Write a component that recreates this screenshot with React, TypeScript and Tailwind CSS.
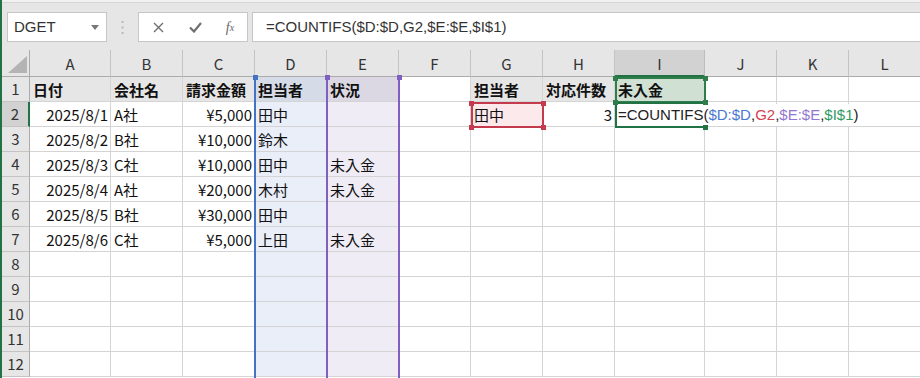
import React from "react";

const COLS = ["A", "B", "C", "D", "E", "F", "G", "H", "I", "J", "K", "L"];

type Cell = { t: string; r?: boolean; b?: boolean };
const DATA: Record<string, Cell> = {
  A1: { t: "日付", b: true },
  B1: { t: "会社名", b: true },
  C1: { t: "請求金額", b: true },
  D1: { t: "担当者", b: true },
  E1: { t: "状況", b: true },
  G1: { t: "担当者", b: true },
  H1: { t: "対応件数", b: true },
  I1: { t: "未入金", b: true },
  A2: { t: "2025/8/1", r: true },
  B2: { t: "A社" },
  C2: { t: "¥5,000", r: true },
  D2: { t: "田中" },
  G2: { t: "田中" },
  H2: { t: "3", r: true },
  A3: { t: "2025/8/2", r: true },
  B3: { t: "B社" },
  C3: { t: "¥10,000", r: true },
  D3: { t: "鈴木" },
  A4: { t: "2025/8/3", r: true },
  B4: { t: "C社" },
  C4: { t: "¥10,000", r: true },
  D4: { t: "田中" },
  E4: { t: "未入金" },
  A5: { t: "2025/8/4", r: true },
  B5: { t: "A社" },
  C5: { t: "¥20,000", r: true },
  D5: { t: "木村" },
  E5: { t: "未入金" },
  A6: { t: "2025/8/5", r: true },
  B6: { t: "B社" },
  C6: { t: "¥30,000", r: true },
  D6: { t: "田中" },
  A7: { t: "2025/8/6", r: true },
  B7: { t: "C社" },
  C7: { t: "¥5,000", r: true },
  D7: { t: "上田" },
  E7: { t: "未入金" },
};

function cellBg(col: string, row: number): string {
  if (row === 1) {
    if (col === "A" || col === "B" || col === "C" || col === "G" || col === "H") return "bg-[#e7e6e6]";
    if (col === "D") return "bg-[#d6dce7]";
    if (col === "E") return "bg-[#dcd8e3]";
    if (col === "I") return "bg-[#d0e0d3]";
    return "bg-white";
  }
  if (col === "D") return "bg-[#e9eef8]";
  if (col === "E") return "bg-[#efecf6]";
  if (col === "G" && row === 2) return "bg-[#fbe9ec]";
  return "bg-white";
}

const CJK = { fontFamily: '"Noto Sans CJK JP", "Noto Sans", sans-serif' };

function Handle({ x, y, color }: { x: number; y: number; color: string }) {
  return (
    <div
      className="absolute w-[5px] h-[5px] z-30"
      style={{ left: x - 2 - 2, top: y - 2, backgroundColor: color }}
    />
  );
}

export default function App() {
  const rows = Array.from({ length: 12 }, (_, i) => i + 1);
  return (
    <div
      className="relative w-[920px] h-[378px] overflow-hidden border-l-2 border-[#217346] bg-white"
      style={CJK}
    >
      {/* Toolbar */}
      <div className="h-[50px] bg-[#e6e6e6] flex flex-col">
        <div className="h-[3px] bg-[#f1f1f1] border-b border-[#d6d6d6]" />
        <div className="flex items-start pt-[9px]">
          <div className="ml-[5px] w-[100px] h-[30px] bg-white border border-[#c6c6c6] flex items-center justify-between pl-[6px] pr-[7px]">
            <span
              className="text-[15px] text-[#333]"
              style={{ fontFamily: '"Liberation Sans", Arial, sans-serif' }}
            >
              DGET
            </span>
            <svg width="8" height="5" viewBox="0 0 8 5">
              <path d="M0 0 L8 0 L4 5 Z" fill="#777" />
            </svg>
          </div>
          <div className="w-[31px] h-[30px] flex items-center justify-center">
            <svg width="3" height="13" viewBox="0 0 3 13">
              <rect x="0.5" y="0" width="2" height="2" fill="#b9b9b9" />
              <rect x="0.5" y="5.5" width="2" height="2" fill="#b9b9b9" />
              <rect x="0.5" y="11" width="2" height="2" fill="#b9b9b9" />
            </svg>
          </div>
          <div className="w-[110px] h-[30px] bg-white border border-[#c6c6c6] flex items-center">
            <div className="w-[38px] flex justify-center pl-[1px]">
              <svg width="11" height="11" viewBox="0 0 11 11">
                <path d="M1 1 L10 10 M10 1 L1 10" stroke="#6f6f6f" strokeWidth="1.4" />
              </svg>
            </div>
            <div className="w-[36px] flex justify-center">
              <svg width="13" height="11" viewBox="0 0 13 11">
                <path d="M1 5.5 L5 9.5 L12 1" stroke="#6f6f6f" strokeWidth="2.2" fill="none" />
              </svg>
            </div>
            <div
              className="w-[34px] flex justify-center text-[#666] italic text-[14px]"
              style={{ fontFamily: '"Liberation Serif", "Times New Roman", serif' }}
            >
              f<span className="text-[10px] mt-[3px]">x</span>
            </div>
          </div>
          <div className="ml-[4px] flex-1 h-[30px] bg-white border border-[#c6c6c6] border-r-0 flex items-center pl-[13px]">
            <span
              className="text-[15px] text-[#333]"
              style={{ fontFamily: '"Liberation Sans", Arial, sans-serif' }}
            >
              =COUNTIFS($D:$D,G2,$E:$E,$I$1)
            </span>
          </div>
        </div>
      </div>

      {/* Grid */}
      <div className="grid grid-cols-[28px_81px_72px_72px_72px_72px_72px_72px_72px_90px_72px_72px_72px] grid-rows-[27px_repeat(12,25px)]">
        {/* corner */}
        <div className="relative bg-[#e6e6e6] border-r border-b border-[#ababab]">
          <svg className="absolute left-[6px] top-[6px]" width="19" height="17" viewBox="0 0 19 17">
            <path d="M0 17 L19 17 L19 0 Z" fill="#b4b4b4" />
          </svg>
        </div>
        {COLS.map((c) =>
          c === "I" ? (
            <div
              key={c}
              className="bg-[#d2d2d2] border-r border-[#bdbdbd] border-b-2 border-b-[#217346] flex items-center justify-center text-[15px] text-[#333] pt-[3px]"
            >
              {c}
            </div>
          ) : (
            <div
              key={c}
              className="bg-[#e6e6e6] border-r border-[#c4c4c4] border-b border-b-[#ababab] flex items-center justify-center text-[15px] text-[#333] pt-[2px]"
            >
              {c}
            </div>
          )
        )}
        {rows.map((r) => (
          <React.Fragment key={r}>
            {r === 2 ? (
              <div className="bg-[#d2d2d2] border-r-2 border-r-[#217346] border-b border-[#c4c4c4] flex items-center justify-center text-[15px] text-[#333]">
                {r}
              </div>
            ) : (
              <div className="bg-[#e6e6e6] border-r border-r-[#ababab] border-b border-[#c4c4c4] flex items-center justify-center text-[15px] text-[#333]">
                {r}
              </div>
            )}
            {COLS.map((c) => {
              const d = DATA[c + r];
              return (
                <div
                  key={c + r}
                  className={`${cellBg(c, r)} border-r border-b border-[#d4d4d4] flex items-center overflow-visible whitespace-nowrap text-[15px] leading-none text-[#111] ${
                    d && d.r ? "justify-end pr-[2px]" : "justify-start pl-[3px]"
                  } ${d && d.b ? "font-bold" : "font-normal"}`}
                >
                  {d ? d.t : ""}
                </div>
              );
            })}
          </React.Fragment>
        ))}
      </div>

      {/* Range highlight: $D:$D (blue) */}
      <div className="absolute z-20 w-[2px] bg-[#4472c4]" style={{ left: 254 - 2, top: 77, bottom: 0 }} />
      <Handle x={255} y={77} color="#4472c4" />
      {/* $E:$E (purple) */}
      <div className="absolute z-20 w-[2px] bg-[#7f60c0]" style={{ left: 326 - 2, top: 77, bottom: 0 }} />
      <div className="absolute z-20 w-[2px] bg-[#7f60c0]" style={{ left: 398 - 2, top: 77, bottom: 0 }} />
      <Handle x={327} y={77} color="#7f60c0" />
      <Handle x={399} y={77} color="#7f60c0" />

      {/* G2 (red) */}
      <div
        className="absolute z-20 border-2 border-[#c43b4e]"
        style={{ left: 471 - 2, top: 102, width: 73, height: 26 }}
      />
      <Handle x={471} y={103} color="#c43b4e" />
      <Handle x={543} y={103} color="#c43b4e" />
      <Handle x={471} y={127} color="#c43b4e" />
      <Handle x={543} y={127} color="#c43b4e" />

      {/* Edit box for I2 */}
      <div
        className="absolute z-10 bg-white flex items-center whitespace-nowrap text-[15px]"
        style={{ left: 617 - 2, top: 104, width: 250, height: 22, fontFamily: '"Liberation Sans", Arial, sans-serif' }}
      >
        <span className="text-[#222] ml-[1px]">=COUNTIFS(</span>
        <span className="text-[#4a78d0]">$D:$D</span>
        <span className="text-[#222]">,</span>
        <span className="text-[#d2434f]">G2</span>
        <span className="text-[#222]">,</span>
        <span className="text-[#9277d0]">$E:$E</span>
        <span className="text-[#222]">,</span>
        <span className="text-[#2e9a63]">$I$1</span>
        <span className="text-[#222]">)</span>
      </div>

      {/* I1 (green reference) */}
      <div
        className="absolute z-20 border-2 border-[#2f7d4a]"
        style={{ left: 615 - 2, top: 77, width: 91, height: 26 }}
      />
      <Handle x={615} y={78} color="#2f7d4a" />
      <Handle x={705} y={78} color="#2f7d4a" />
      <Handle x={615} y={102} color="#2f7d4a" />
      <Handle x={705} y={102} color="#2f7d4a" />

      {/* I2 active cell */}
      <div
        className="absolute z-20 border-2 border-r-0 border-[#217346]"
        style={{ left: 615 - 2, top: 102, width: 91, height: 26 }}
      />
      <Handle x={705} y={127} color="#217346" />
    </div>
  );
}
